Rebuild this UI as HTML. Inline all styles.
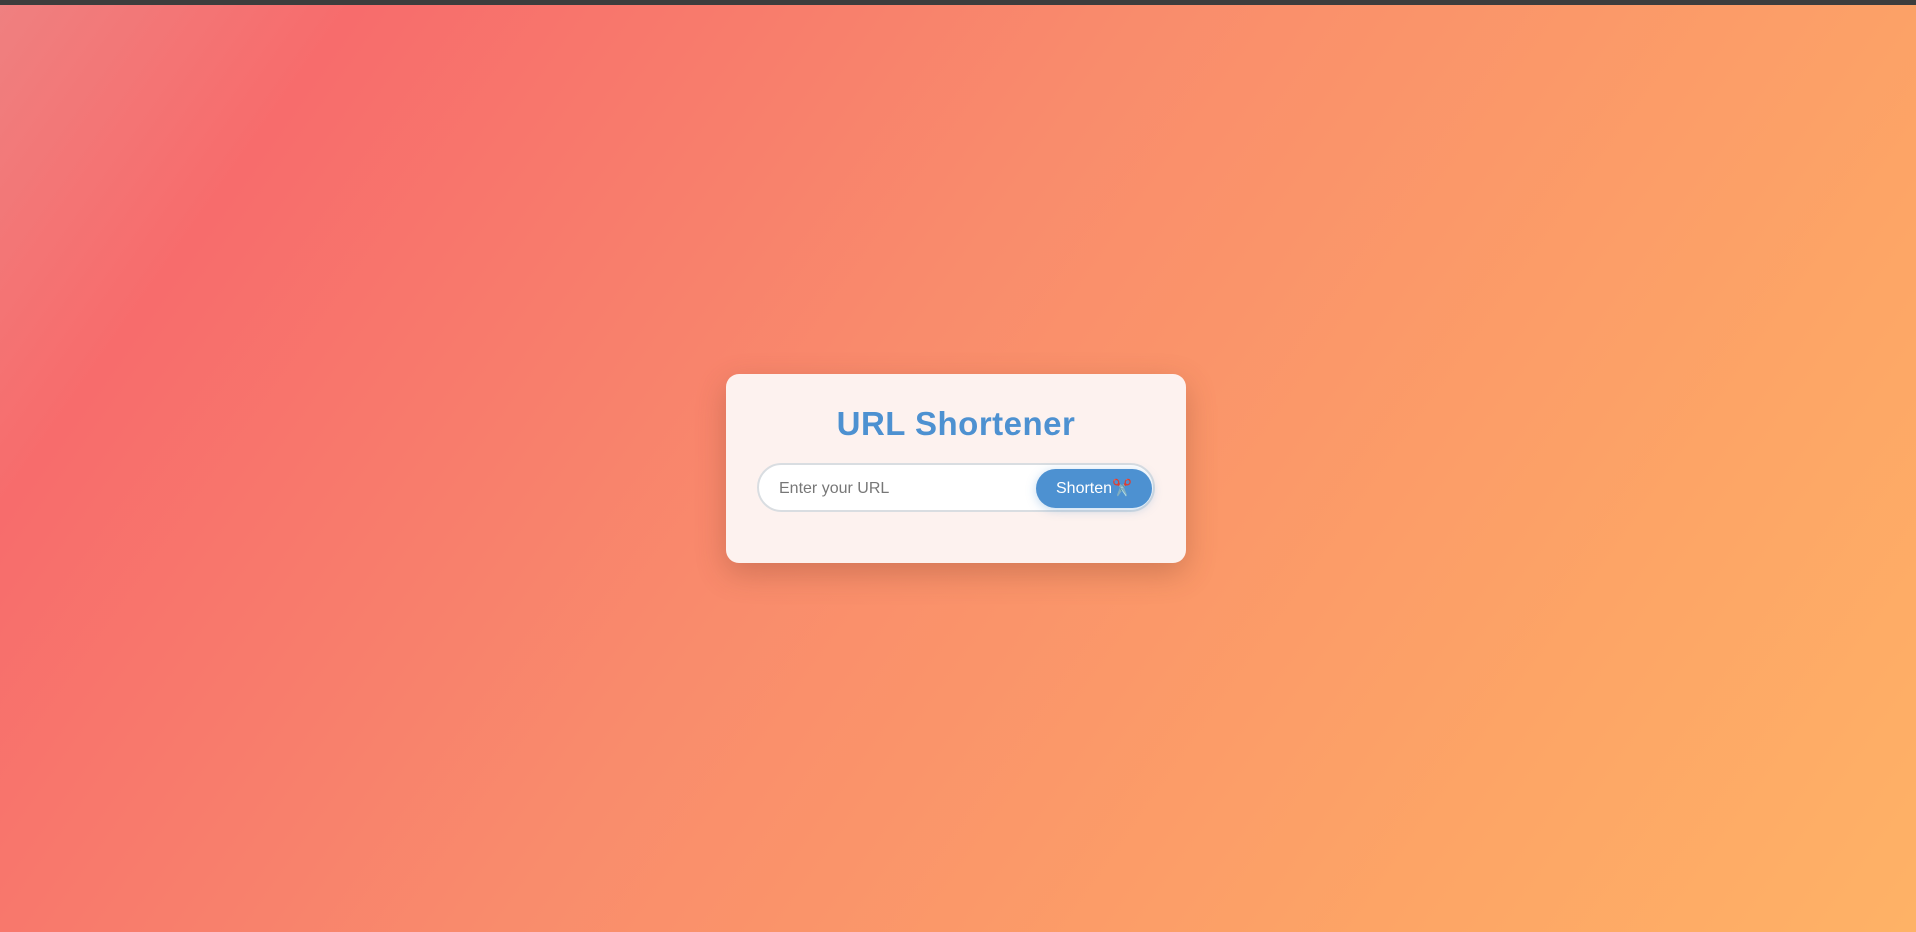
<!DOCTYPE html>
<html><head><meta charset="utf-8"><style>
html,body{margin:0;width:1916px;height:932px;overflow:hidden;}
body{background:linear-gradient(125deg,#ef8080 0%,#f76c6c 14%,#f98c6c 45%,#fda566 80%,#feb266 100%);position:relative;font-family:"Liberation Sans",sans-serif;}
.top{position:absolute;left:0;top:0;width:100%;height:5px;background:#3d3d3d;}
.card{position:absolute;left:726px;top:374px;width:460px;height:189px;background:#fdf2ef;border-radius:13px;box-shadow:0 10px 30px rgba(120,60,40,.3);}
h1{position:absolute;left:0;right:0;top:31px;margin:0;text-align:center;color:#4d91d1;font-size:33px;font-weight:bold;letter-spacing:0.5px;}
.inp{position:absolute;left:31px;top:89px;width:394px;height:45px;border:2px solid #d9dde1;border-radius:26px;background:#fff;}
.ph{position:absolute;left:20px;top:15px;font-size:16px;color:#777;}
.btn{position:absolute;left:277px;top:4px;width:116px;height:39px;border-radius:20px;background:#4d91d1;color:#fff;font-size:16px;line-height:40px;text-align:left;padding-left:20px;box-sizing:border-box;box-shadow:0 2px 10px rgba(77,145,209,.35);}
</style></head><body>
<div class="top"></div>
<div class="card">
<h1>URL Shortener</h1>
<div class="inp"><span class="ph">Enter your URL</span><div class="btn">Shorten✂️</div></div>
</div>
</body></html>
